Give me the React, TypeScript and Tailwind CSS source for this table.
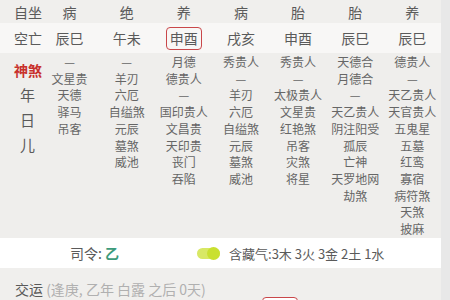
const stages = ['病', '绝', '养', '病', '胎', '胎', '养'];
const kongwang = ['辰巳', '午未', '申酉', '戌亥', '申酉', '辰巳', '辰巳'];

const shensha: string[][] = [
  ['—', '文星贵', '天德', '驿马', '吊客'],
  ['—', '羊刃', '六厄', '自缢煞', '元辰', '墓煞', '威池'],
  ['月德', '德贵人', '—', '国印贵人', '文昌贵', '天印贵', '丧门', '吞陷'],
  ['秀贵人', '—', '羊刃', '六厄', '自缢煞', '元辰', '墓煞', '威池'],
  ['秀贵人', '—', '太极贵人', '文星贵', '红艳煞', '吊客', '灾煞', '将星'],
  ['天德合', '月德合', '—', '天乙贵人', '阴注阳受', '孤辰', '亡神', '天罗地网', '劫煞'],
  ['德贵人', '—', '天乙贵人', '天官贵人', '五鬼星', '五墓', '红鸾', '寡宿', '病符煞', '天煞', '披麻'],
];

const grid = 'grid shrink-0 grid-cols-[41px_repeat(7,57.14px)]';

export default function App() {
  return (
    <div className="flex h-[300px] w-[450px] overflow-hidden bg-[#efeeec] font-['Noto_Sans_CJK_SC','Noto_Sans',sans-serif] text-[#5a5a5a]">
      <div className="flex w-[441px] shrink-0 flex-col">
        {/* 自坐 */}
        <div className={`${grid} h-[23px] items-center bg-[#f0efed] text-[14px] leading-none`}>
          <div className="whitespace-nowrap pl-[14px]">自坐</div>
          {stages.map((s, i) => (
            <div key={i} className="text-center">{s}</div>
          ))}
        </div>

        {/* 空亡 */}
        <div className={`${grid} h-[30px] items-center bg-[#f8f7f6] text-[14px] leading-none`}>
          <div className="whitespace-nowrap pl-[14px]">空亡</div>
          {kongwang.map((k, i) => (
            <div key={i} className="flex justify-center">
              {i === 2 ? (
                <span className="flex h-[23px] items-center rounded-[4px] border-[1.5px] border-[#c9474a] px-[3px]">{k}</span>
              ) : (
                <span>{k}</span>
              )}
            </div>
          ))}
        </div>

        {/* 神煞 */}
        <div className={`${grid} h-[185px] bg-[#efeeec] pt-[1px]`}>
          <div className="flex flex-col pl-[14px] pt-[4px]">
            <div className="flex h-[25px] items-center whitespace-nowrap text-[14px] font-bold text-[#c8312c]">神煞</div>
            <div className="flex h-[25px] items-center justify-center text-[15px]">年</div>
            <div className="flex h-[25px] items-center justify-center text-[15px]">日</div>
            <div className="flex h-[25px] items-center justify-center text-[15px]">儿</div>
          </div>
          {shensha.map((col, i) => (
            <div key={i} className="flex flex-col items-center text-[12px] leading-[16.7px] text-[#666]">
              {col.map((s, j) => (
                <div key={j} className="whitespace-nowrap">{s}</div>
              ))}
            </div>
          ))}
        </div>

        {/* 司令 */}
        <div className="flex h-[30px] shrink-0 items-center bg-white pl-[70px] text-[14px] leading-none">
          <span>
            司令: <span className="font-bold text-[#3d9b7b]">乙</span>
          </span>
          <div className="relative ml-[78px] h-[11px] w-[23px] rounded-full bg-[#d8e865]">
            <div className="absolute right-0 top-[-1px] h-[13px] w-[13px] rounded-full bg-[#c9e030]" />
          </div>
          <span className="ml-[9px] text-[13px]">含藏气:3木 3火 3金 2土 1水</span>
        </div>

        {/* 交运 */}
        <div className="flex shrink-0 flex-col bg-[#f0efed] pl-[15px] pt-[13px]">
          <div className="text-[14px] leading-[16px]">
            交运 <span className="text-[#b0b0b0]">(逢庚, 乙年 白露 之后 0天)</span>
          </div>
          <div className="ml-[247px] h-[24px] w-[36px] rounded-[4px] border-[1.5px] border-[#c9474a] bg-white" />
        </div>
      </div>
      <div className="flex-1 bg-[#e8e8e8]" />
    </div>
  );
}
